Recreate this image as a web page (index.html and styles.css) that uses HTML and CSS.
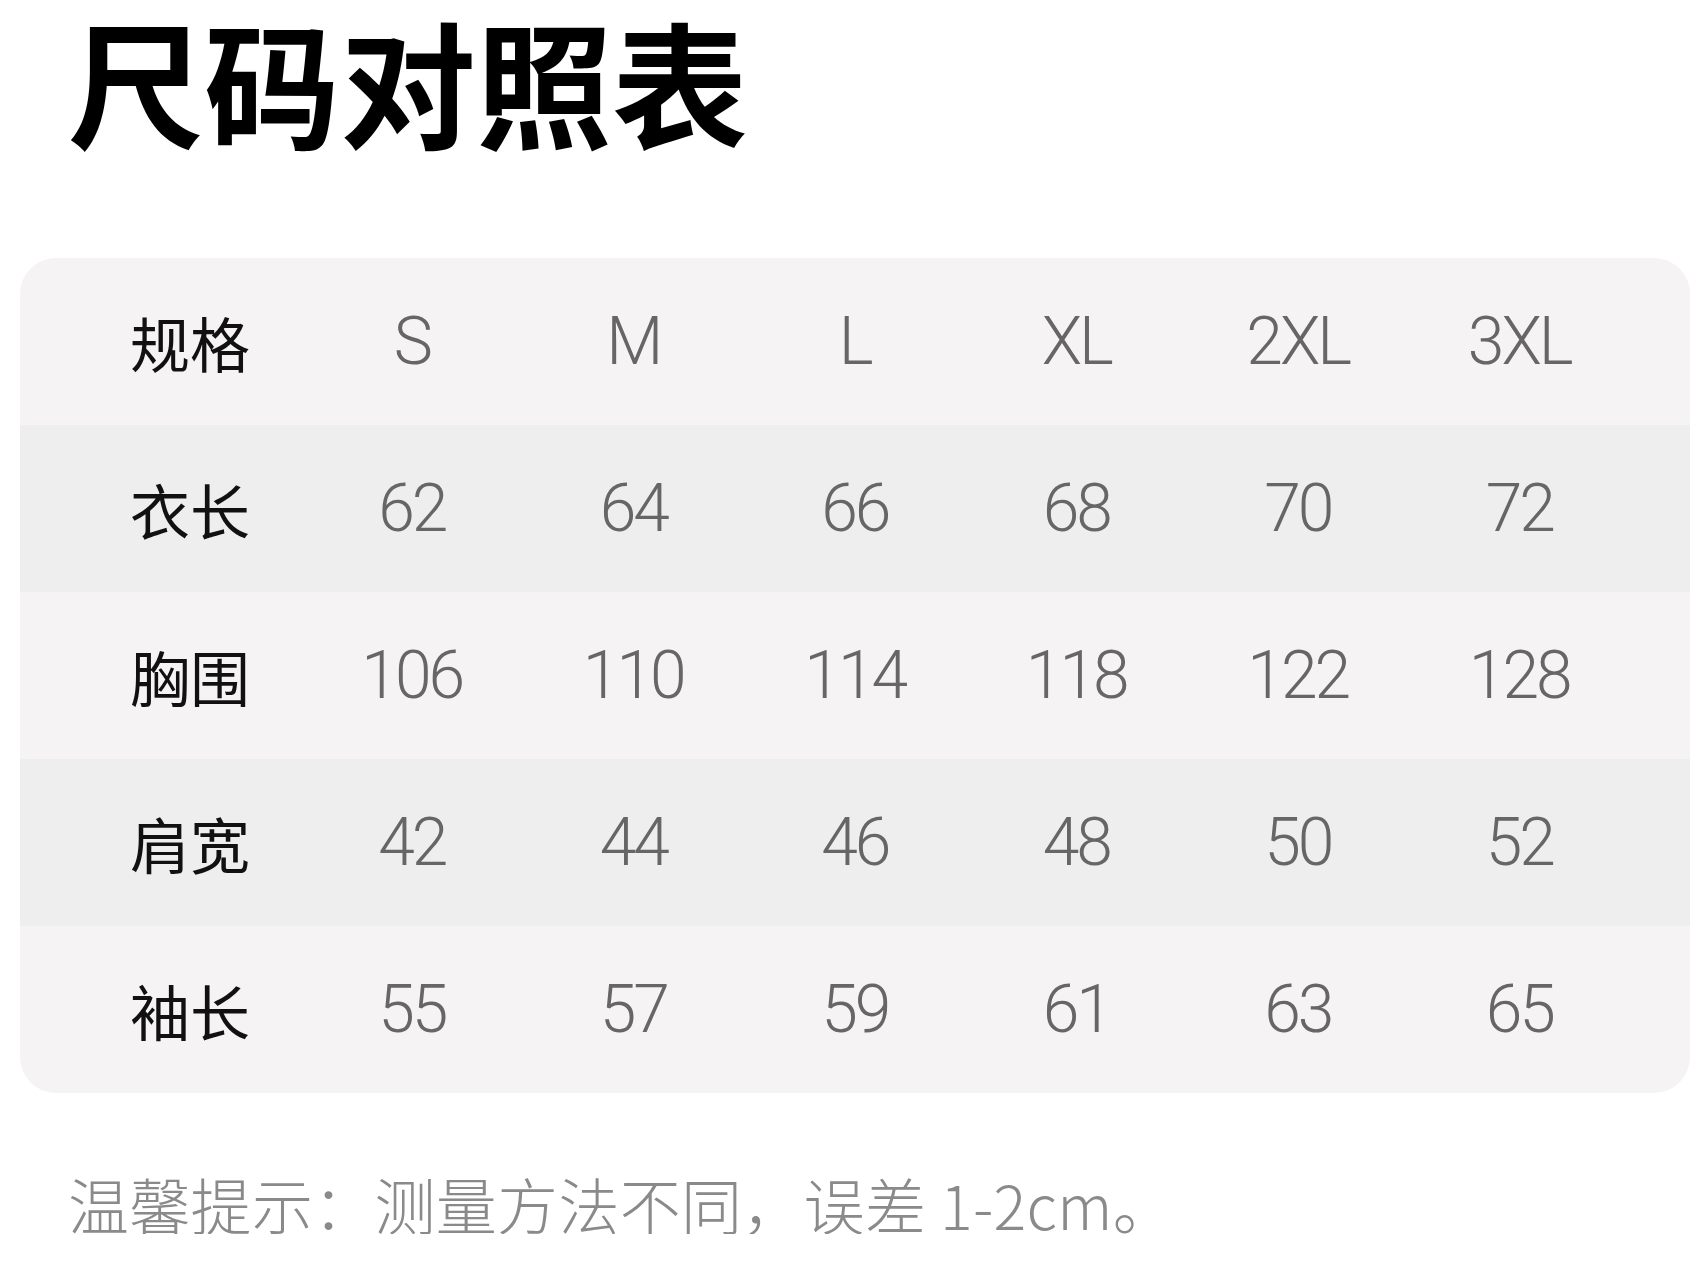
FILE: index.html
```html
<!DOCTYPE html>
<html lang="zh-CN">
<head>
<meta charset="utf-8">
<title>尺码对照表</title>
<link rel="stylesheet" href="styles.css">
</head>
<body>
<div class="page">
  <h1 class="title">尺码对照表</h1>
  <div class="card">
    <div class="row odd">
      <div class="cell label">规格</div>
      <div class="cell val">S</div>
      <div class="cell val">M</div>
      <div class="cell val">L</div>
      <div class="cell val">XL</div>
      <div class="cell val">2XL</div>
      <div class="cell val">3XL</div>
    </div>
    <div class="row even">
      <div class="cell label">衣长</div>
      <div class="cell val">62</div>
      <div class="cell val">64</div>
      <div class="cell val">66</div>
      <div class="cell val">68</div>
      <div class="cell val">70</div>
      <div class="cell val">72</div>
    </div>
    <div class="row odd">
      <div class="cell label">胸围</div>
      <div class="cell val">106</div>
      <div class="cell val">110</div>
      <div class="cell val">114</div>
      <div class="cell val">118</div>
      <div class="cell val">122</div>
      <div class="cell val">128</div>
    </div>
    <div class="row even">
      <div class="cell label">肩宽</div>
      <div class="cell val">42</div>
      <div class="cell val">44</div>
      <div class="cell val">46</div>
      <div class="cell val">48</div>
      <div class="cell val">50</div>
      <div class="cell val">52</div>
    </div>
    <div class="row odd">
      <div class="cell label">袖长</div>
      <div class="cell val">55</div>
      <div class="cell val">57</div>
      <div class="cell val">59</div>
      <div class="cell val">61</div>
      <div class="cell val">63</div>
      <div class="cell val">65</div>
    </div>
  </div>
  <p class="note">温馨提示：测量方法不同，误差 1-2cm。</p>
</div>
</body>
</html>
```

FILE: styles.css
```css
html, body {
  margin: 0;
  padding: 0;
  background: #ffffff;
}
.page {
  width: 1707px;
  padding-top: 2px;
}
.title {
  margin: 0 0 0 68px;
  font-family: "Noto Sans CJK SC", sans-serif;
  font-weight: 700;
  font-size: 136px;
  line-height: 156px;
  color: #000000;
  letter-spacing: 0;
}
.card {
  margin: 100px 0 0 20px;
  width: 1670px;
  border-radius: 36px;
  overflow: hidden;
}
.row {
  display: grid;
  grid-template-columns: 222px repeat(6, 221.5px);
  height: 167px;
  padding-left: 59px;
  align-items: center;
}
.row.odd { background: #f5f3f4; }
.row.even { background: #efeeee; }
.cell {
  text-align: center;
}
.label {
  font-family: "Noto Sans CJK SC", sans-serif;
  font-size: 60px;
  color: #111111;
  font-weight: 400;
  line-height: 1;
}
.val {
  font-family: Roboto, "Noto Sans", sans-serif;
  font-weight: 300;
  font-size: 66px;
  letter-spacing: -3px;
  color: #666666;
  line-height: 1;
}
.note {
  margin: 80px 0 0 68px;
  font-family: "Noto Sans CJK SC", sans-serif;
  font-weight: 300;
  font-size: 61px;
  letter-spacing: 0.3px;
  line-height: 1;
  color: #8a8a8a;
}
```
